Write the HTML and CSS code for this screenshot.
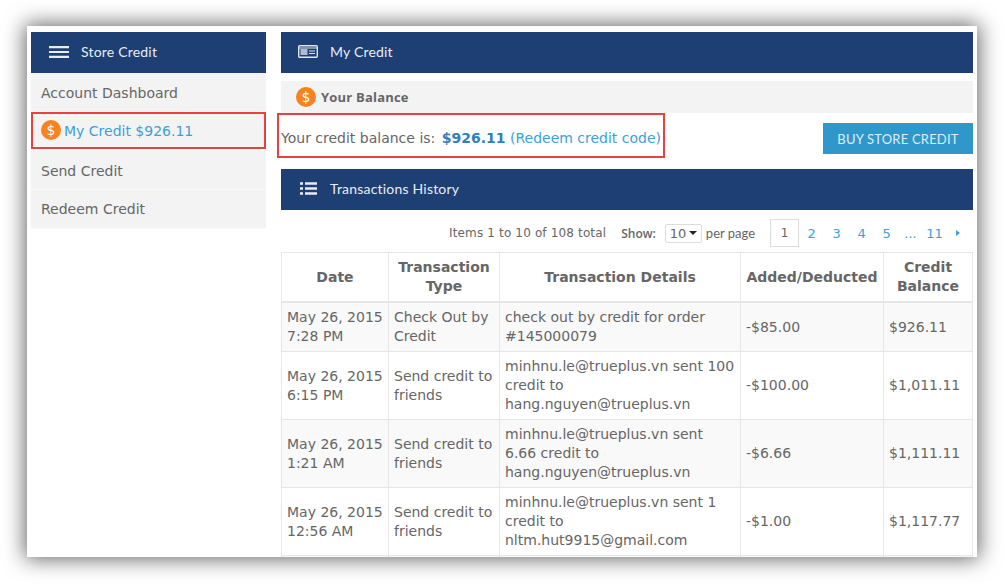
FILE: index.html
```html
<!DOCTYPE html>
<html lang="en">
<head>
<meta charset="utf-8">
<title>My Credit</title>
<link rel="stylesheet" href="styles.css">
</head>
<body>
<div class="panel">
  <aside class="side">
    <div class="bar side-bar">
      <svg class="ico-menu" width="20" height="12" viewBox="0 0 20 12"><path d="M0 1.2h20M0 6h20M0 10.8h20" stroke="#e8edf4" stroke-width="2.2"/></svg>
      <span>Store Credit</span>
    </div>
    <a class="item">Account Dashboard</a>
    <a class="item current">
      <svg class="coin" width="20" height="20" viewBox="0 0 20 20"><circle cx="10" cy="10" r="10" fill="#f5831f"/><text x="10" y="15" text-anchor="middle" class="coin-t">$</text></svg>
      <span class="cur-label">My Credit $926.11</span>
    </a>
    <a class="item">Send Credit</a>
    <a class="item last">Redeem Credit</a>
  </aside>
  <main class="content">
    <div class="bar">
      <svg class="ico-card" width="20" height="13" viewBox="0 0 20 13"><rect x="0.7" y="0.7" width="18.6" height="11.6" rx="1" fill="none" stroke="#dfe6f0" stroke-width="1.4"/><rect x="2.5" y="4" width="7" height="6" fill="#aebcd0"/><path d="M1 3h18M11 6h6M11 8.5h6" stroke="#dfe6f0" stroke-width="1.2"/></svg>
      <span>My Credit</span>
    </div>
    <div class="sub">
      <svg class="coin" width="20" height="20" viewBox="0 0 20 20"><circle cx="10" cy="10" r="10" fill="#f5831f"/><text x="10" y="15" text-anchor="middle" class="coin-t">$</text></svg>
      <b>Your Balance</b>
    </div>
    <div class="balance">
      <div class="bal-text">Your credit balance is: <b>$926.11</b> <a>(Redeem credit code)</a></div>
      <button class="buy" type="button">BUY STORE CREDIT</button>
    </div>
    <div class="bar list-bar">
      <svg class="ico-list" width="17" height="13" viewBox="0 0 17 13"><path d="M0 1.5h3M0 6.5h3M0 11.5h3M5 1.5h12M5 6.5h12M5 11.5h12" stroke="#e8edf4" stroke-width="2.4"/></svg>
      <span>Transactions History</span>
    </div>
    <div class="pager">
      <span class="count">Items 1 to 10 of 108 total</span>
      <span class="show">Show:</span>
      <span class="select">10<i class="caret"></i></span>
      <span class="per">per page</span>
      <span class="pages">
        <span class="page on">1</span><a class="page">2</a><a class="page">3</a><a class="page">4</a><a class="page">5</a><a class="page dots">...</a><a class="page">11</a><i class="next"></i>
      </span>
    </div>
    <table class="grid">
      <colgroup><col class="c1"><col class="c2"><col class="c3"><col class="c4"><col class="c5"></colgroup>
      <thead>
        <tr><th>Date</th><th>Transaction Type</th><th>Transaction Details</th><th>Added/Deducted</th><th>Credit Balance</th></tr>
      </thead>
      <tbody>
        <tr class="odd"><td>May 26, 2015 7:28 PM</td><td>Check Out by Credit</td><td>check out by credit for order #145000079</td><td>-$85.00</td><td>$926.11</td></tr>
        <tr><td>May 26, 2015 6:15 PM</td><td>Send credit to friends</td><td>minhnu.le@trueplus.vn sent 100 credit to hang.nguyen@trueplus.vn</td><td>-$100.00</td><td>$1,011.11</td></tr>
        <tr class="odd"><td>May 26, 2015 1:21 AM</td><td>Send credit to friends</td><td>minhnu.le@trueplus.vn sent 6.66 credit to hang.nguyen@trueplus.vn</td><td>-$6.66</td><td>$1,111.11</td></tr>
        <tr><td>May 26, 2015 12:56 AM</td><td>Send credit to friends</td><td>minhnu.le@trueplus.vn sent 1 credit to nltm.hut9915@gmail.com</td><td>-$1.00</td><td>$1,117.77</td></tr>
        <tr class="odd clipped"><td></td><td></td><td></td><td></td><td></td></tr>
      </tbody>
    </table>
  </main>
</div>
</body>
</html>
```
FILE: styles.css
```css
* { box-sizing: border-box; }
html, body { margin: 0; height: 100%; background: #fff; overflow: hidden; }
body { padding: 26px 27px 27px; font-family: "DejaVu Sans", sans-serif; font-size: 14px; color: #666; }
.panel { height: 531px; background: #fff; box-shadow: 0 0 20px 2px rgba(0,0,0,.6); display: flex; gap: 15px; padding: 6px 4px 0; overflow: hidden; }
.side { width: 235px; flex: none; }
.content { width: 692px; flex: none; }
.bar { height: 41px; padding-bottom: 2px; background: #1e3f74; color: #e8edf4; display: flex; align-items: center; font-family: Lato, "Open Sans", sans-serif; font-size: 14px; letter-spacing: .2px; padding-left: 18px; }
.bar svg { flex: none; margin-right: 12px; }
.content .bar { padding-left: 17px; }
.content .list-bar { padding-left: 19px; }
.list-bar svg { margin-right: 13px; }
.item { height: 39px; padding-top: 1px; display: flex; align-items: center; padding-left: 10px; background: #f3f3f3; border-bottom: 1px solid #fafafa; }
.item.last { padding-top: 0; padding-bottom: 1px; }
.current { color: #3f9fd6; outline: 2px solid #ea4040; outline-offset: -2px; height: 37px; margin-bottom: 2px; gap: 3px; padding-top: 0; }
.cur-label { padding-top: 2px; }
.coin { flex: none; }
.coin-t { font: 14px "DejaVu Sans", sans-serif; fill: #fff; }
.sub { height: 32px; margin-top: 8px; background: #f3f3f3; display: flex; align-items: center; gap: 5px; padding-left: 15px; font-family: "Open Sans", sans-serif; font-size: 13px; letter-spacing: .2px; }
.balance { height: 56px; display: flex; align-items: flex-start; justify-content: space-between; }
.bal-text { border: 2px solid #ea4040; padding: 15px 2px 0 2px; height: 45px; margin-left: -4px; white-space: nowrap; }
.bal-text b { color: #2f7fbd; margin-left: 2px; }
.bal-text a { color: #3f9fd6; }
.buy { width: 150px; height: 31px; margin-top: 10px; border: 0; background: #3097cb; color: #dfeef7; font: 13px Lato, "Open Sans", sans-serif; letter-spacing: .2px; padding: 0; }
.pager { height: 42px; display: flex; align-items: center; font-size: 12px; padding-top: 4px; }
.count { margin-left: 168px; letter-spacing: .15px; }
.show { margin-left: 15px; font-family: "Open Sans", sans-serif; font-size: 12px; font-weight: 600; }
.select { margin-left: 9px; width: 37px; height: 19px; border: 1px solid #ddd; border-radius: 2px; font-size: 13px; padding-left: 4px; display: flex; align-items: center; gap: 3px; }
.caret { border: 4px solid transparent; border-top-color: #222; border-bottom: 0; }
.per { margin-left: 4px; font-family: Lato, sans-serif; font-size: 13px; }
.pages { display: flex; align-items: center; margin-left: 15px; font-size: 13px; color: #3f9fd6; }
.page { width: 25px; text-align: center; }
.page.on { width: 29px; height: 28px; line-height: 27px; border: 1px solid #ddd; color: #636363; font-size: 12px; }
.dots { width: 23px; }
.next { margin-left: 9px; border: 3px solid transparent; border-left: 4px solid #3f9fd6; border-right: 0; }
.grid { width: 691px; table-layout: fixed; border-collapse: collapse; line-height: 19px; }
.c1 { width: 107px; } .c2 { width: 111px; } .c3 { width: 241px; } .c4 { width: 143px; } .c5 { width: 89px; }
.grid th, .grid td { border: 1px solid #e6e6e6; padding: 5px; vertical-align: middle; }
.grid th { text-align: center; font-weight: bold; border-bottom-width: 2px; padding: 5px 3px; }
.grid tr.odd td { background: #f9f9f9; }
.grid tr.clipped td { height: 40px; }
```
